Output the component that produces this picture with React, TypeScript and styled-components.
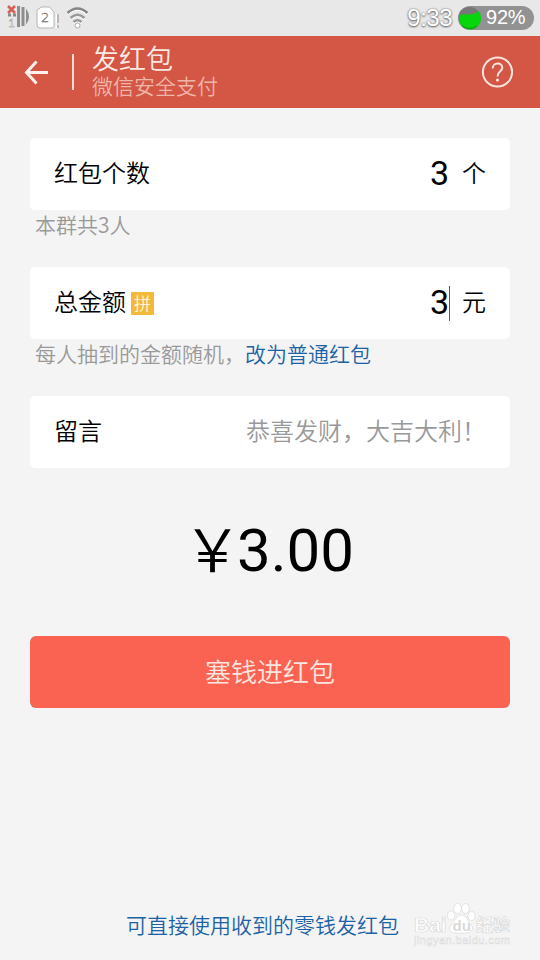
import React from 'react';
import styled, { createGlobalStyle } from 'styled-components';

const cjk = '"Noto Sans CJK SC", sans-serif';
const latin = 'Roboto, "Noto Sans CJK SC", sans-serif';
const status = '"Liberation Sans", sans-serif';

const GlobalStyle = createGlobalStyle`
  * { box-sizing: border-box; }
  body { margin: 0; background: #f4f4f4; font-family: ${cjk}; }
`;

const Screen = styled.div`
  width: 540px;
  height: 960px;
  display: flex;
  flex-direction: column;
  overflow: hidden;
  background: #f4f4f4;
  font-weight: 350;
`;

const StatusBar = styled.div`
  height: 36px;
  flex: none;
  display: flex;
  justify-content: space-between;
  background: #e8e8e8;
`;

const Clock = styled.div`
  display: flex;
  align-items: center;
  gap: 6px;
  height: 35px;
  padding-right: 6px;
  font-family: ${status};
  font-weight: 400;
`;

const Time = styled.span`
  font-size: 24px;
  letter-spacing: -0.5px;
  color: #fff;
  text-shadow: 0 0 2px #666, 0 1px 2px #666;
`;

const Battery = styled.div`
  display: flex;
  align-items: center;
  gap: 5px;
  width: 76px;
  height: 24px;
  border-radius: 12px;
  background: #929292;
  color: #fff;
  font-size: 20px;
  letter-spacing: -0.2px;
`;

const Header = styled.header`
  height: 72px;
  flex: none;
  display: flex;
  align-items: center;
  padding: 0 26px 0 23px;
  background: #d45645;
`;

const Divider = styled.div`
  width: 2px;
  height: 36px;
  margin: 0 18px 0 22px;
  background: #f8ddd7;
`;

const Titles = styled.div`
  flex: 1;
  display: flex;
  flex-direction: column;
  padding-bottom: 2px;
`;

const Title = styled.div`
  font-size: 27px;
  line-height: 28px;
  color: #fbe9e4;
`;

const Subtitle = styled.div`
  font-size: 21px;
  line-height: 26px;
  color: #f0b5aa;
`;

const Form = styled.main`
  flex: 1;
  display: flex;
  flex-direction: column;
  padding: 30px 30px 0;
`;

const Card = styled.div`
  height: 72px;
  flex: none;
  display: flex;
  align-items: center;
  padding: 0 24px;
  border-radius: 5px;
  background: #fff;
  color: #000;
  font-size: 24px;
  line-height: 36px;
`;

const Label = styled.div`
  flex: 1;
  display: flex;
  align-items: center;
  padding-bottom: 5px;
`;

const Tag = styled.span`
  width: 23px;
  height: 23px;
  margin: 5px 0 0 5px;
  border-radius: 1px;
  background: #f3b93b;
  color: #fff6dc;
  font-size: 17px;
  line-height: 22px;
  text-align: center;
`;

const Amount = styled.span<{ $active?: boolean }>`
  height: 35px;
  border-right: 1px solid ${p => (p.$active ? '#555' : 'transparent')};
  font-family: ${latin};
  font-size: 34px;
  font-weight: 400;
  line-height: 33px;
`;

const Unit = styled.span`
  margin-left: 12px;
  padding-bottom: 5px;
`;

const Message = styled.span`
  width: 240px;
  padding-bottom: 4px;
  color: #999;
  white-space: nowrap;
`;

const Hint = styled.div`
  height: 57px;
  flex: none;
  padding-left: 5px;
  color: #999;
  font-size: 21px;
  line-height: 28px;
`;

const Link = styled.a`
  color: #1b62a6;
`;

const Total = styled.div`
  display: flex;
  justify-content: center;
  align-items: center;
  height: 168px;
  flex: none;
  padding: 0 0 2px 4px;
  font-family: ${latin};
  font-size: 60px;
  font-weight: 400;
  line-height: 72px;
`;

const Yen = styled.span`
  width: 47px;
  padding-bottom: 8px;
  font-family: ${cjk};
  font-size: 59px;
  font-weight: 350;
  text-indent: -7px;
`;

const Submit = styled.button`
  height: 72px;
  flex: none;
  border: 0;
  border-radius: 6px;
  padding: 0 0 4px;
  background: #fa6352;
  color: #fde6e0;
  font-family: ${cjk};
  font-size: 26px;
  font-weight: 350;
`;

const Footer = styled.footer`
  height: 70px;
  flex: none;
  display: flex;
  align-items: flex-start;
  padding: 19px 0 0 126px;
  font-size: 21px;
  line-height: 30px;
`;

const Watermark = styled.div`
  display: flex;
  flex-direction: column;
  margin: -12px 0 0 15px;
`;

const SignalIcons = () => (
  <svg width="100" height="36" viewBox="0 0 100 36">
    <path d="M8 6l7 7M15 6l-7 7" stroke="#d95c57" strokeWidth="2.6" />
    <path d="M8 15h3M13 15h3" stroke="#888" strokeWidth="3" />
    <path d="M18.500 6v21M23 7v19" stroke="#8e8e8e" strokeWidth="3" />
    <path d="M26 8.500q6 8 0 16z" fill="#8e8e8e" />
    <text x="8.500" y="27" fontFamily="Liberation Sans" fontSize="11" fill="#fff" stroke="#888" strokeWidth=".4">1</text>
    <path d="M41 7h8.500l4.500 5v14q0 2-2 2H40q-3 0-3-3V10.500z" fill="#fff" stroke="#b5b5b5" />
    <text x="41" y="22" fontFamily="DejaVu Sans" fontSize="13" fill="#777" stroke="#777" strokeWidth=".3">2</text>
    <path d="M57.800 14v9M57.800 25v3" stroke="#999" strokeWidth="1.600" />
    <path d="M56.500 14v9M56.500 25v3" stroke="#fff" strokeWidth="1.600" />
    <g fill="none" strokeWidth="2.600">
      <path d="M67.500 14q10-9 20 0" stroke="#fff" />
      <path d="M67.500 13q10-9 20 0" stroke="#858585" />
      <path d="M70.500 19q7-6.500 14 0" stroke="#fff" />
      <path d="M70.500 18q7-6.500 14 0" stroke="#999" />
      <path d="M73.500 23q4-3.500 8 0" stroke="#fff" />
      <path d="M73.500 22q4-3.500 8 0" stroke="#999" />
    </g>
    <circle cx="77.500" cy="25.500" r="2.500" fill="#fff" stroke="#999" strokeWidth=".8" />
  </svg>
);

const BatteryLevel = () => (
  <svg width="23" height="24" viewBox="0 0 23 24">
    <circle cx="11.500" cy="12" r="11" fill="#777" />
    <path d="M1 9.500q5-2 9-1q6 0 11-3.500q2 3 2 7a11 11 0 0 1-22 1z" fill="#08d60c" />
    <path d="M4 20q8 5 15 0" fill="none" stroke="#08951a" />
  </svg>
);

const BackIcon = () => (
  <svg width="27" height="28" viewBox="0 0 27 28" fill="none" stroke="#fff1ed" strokeWidth="3">
    <path d="M13.500 3.500L3.500 14.500L13.500 25.500M3.500 14.500H25" />
  </svg>
);

const HelpIcon = () => (
  <svg width="33" height="34" viewBox="0 0 33 34" fill="none" stroke="#fbe4de" strokeWidth="2">
    <circle cx="16.500" cy="17" r="14.600" />
    <path d="M11.700 13.500C11.700 7 21.300 7 21.300 12.800C21.300 16.500 16.500 16.300 16.500 21.500" />
    <circle cx="16.500" cy="25" r="1.600" fill="#fbe4de" stroke="none" />
  </svg>
);

const BaiduMark = () => (
  <svg width="102" height="52" viewBox="0 0 102 52" fill="#fff" stroke="#d9d9d9" strokeWidth=".7">
    <g fontFamily="Liberation Sans" fontWeight="700">
      <text x="0" y="35" fontSize="21">Bai</text>
      <text x="62" y="34" fontFamily="Noto Sans CJK SC" fontSize="17">经验</text>
      <text x="0" y="47" fontSize="11" fontWeight="400" textLength="96" strokeWidth=".5">jingyan.baidu.com</text>
    </g>
    <ellipse cx="37" cy="18.500" rx="3.500" ry="4.500" />
    <ellipse cx="43.500" cy="11.500" rx="3.800" ry="5" />
    <ellipse cx="51.500" cy="11.500" rx="3.800" ry="5" />
    <ellipse cx="57.500" cy="19" rx="3.500" ry="4.500" />
    <path d="M47.500 18C42 18 42 23 38 27C32 33 37 37 47 36C58 37 62 32 56 27C53 23 53 18 47.500 18z" />
    <text x="38.500" y="34" fontFamily="Liberation Sans" fontWeight="700" fontSize="15" fill="#d9d9d9" stroke="none">du</text>
  </svg>
);

export default function App() {
  return (
    <>
      <GlobalStyle />
      <Screen>
        <StatusBar>
          <SignalIcons />
          <Clock>
            <Time>9:33</Time>
            <Battery>
              <BatteryLevel />
              92%
            </Battery>
          </Clock>
        </StatusBar>
        <Header>
          <BackIcon />
          <Divider />
          <Titles>
            <Title>发红包</Title>
            <Subtitle>微信安全支付</Subtitle>
          </Titles>
          <HelpIcon />
        </Header>
        <Form>
          <Card>
            <Label>红包个数</Label>
            <Amount>3</Amount>
            <Unit>个</Unit>
          </Card>
          <Hint>本群共3人</Hint>
          <Card>
            <Label>总金额<Tag>拼</Tag></Label>
            <Amount $active>3</Amount>
            <Unit>元</Unit>
          </Card>
          <Hint>每人抽到的金额随机，<Link>改为普通红包</Link></Hint>
          <Card>
            <Label>留言</Label>
            <Message>恭喜发财，大吉大利！</Message>
          </Card>
          <Total><Yen>￥</Yen>3.00</Total>
          <Submit>塞钱进红包</Submit>
        </Form>
        <Footer>
          <Link>可直接使用收到的零钱发红包</Link>
          <Watermark><BaiduMark /></Watermark>
        </Footer>
      </Screen>
    </>
  );
}
